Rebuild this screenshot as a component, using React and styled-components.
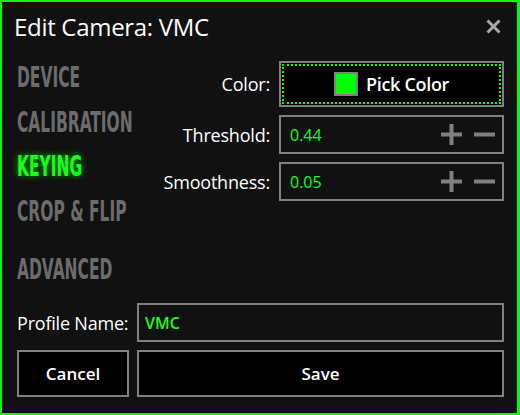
import styled, { createGlobalStyle } from 'styled-components';

const Global = createGlobalStyle`
    html, body {
        margin: 0;
        padding: 0;
        background: #111;
    }
    * {
        box-sizing: border-box;
    }
`;

const Dialog = styled.div`
    width: 520px;
    height: 415px;
    background: #111111;
    border: 2px solid #00ff00;
    border-right-width: 3px;
    display: flex;
    flex-direction: column;
    font-family: "Open Sans", "Noto Sans", sans-serif;
    color: #fff;
`;

const Header = styled.div`
    height: 46px;
    display: flex;
    align-items: center;
    justify-content: space-between;
    padding: 2px 16px 0 12px;
`;

const Title = styled.div`
    font-size: 24px;
    letter-spacing: -0.3px;
`;

const Close = styled.button`
    background: none;
    border: none;
    padding: 0;
    width: 15px;
    height: 15px;
    display: flex;
    cursor: pointer;
`;

const Body = styled.div`
    flex: 1;
    display: flex;
    padding: 13px 13px 0 15px;
`;

const Nav = styled.div`
    width: 140px;
    display: flex;
    flex-direction: column;
    padding-top: 1px;
`;

const NavItem = styled.div`
    height: ${p => p.$tall ? '58px' : '44.5px'};
    font-family: "DejaVu Sans Condensed", "Liberation Sans Narrow", sans-serif;
    font-weight: bold;
    font-size: 20px;
    line-height: 20px;
    text-transform: uppercase;
    white-space: nowrap;
    color: ${p => p.$active ? '#1aff1a' : '#6c6c6c'};
    text-shadow: ${p => p.$active ? '0 0 6px rgba(0, 255, 0, 0.7)' : 'none'};
    cursor: pointer;

    span {
        display: inline-block;
        transform: scale(0.86, 1.45);
        transform-origin: top left;
    }
`;

const Form = styled.div`
    flex: 1;
    display: grid;
    grid-template-columns: 1fr 225px;
    grid-auto-rows: min-content;
    column-gap: 9px;
    row-gap: 8px;
`;

const Label = styled.label`
    font-size: 18px;
    letter-spacing: -0.2px;
    text-align: right;
    align-self: center;
`;

const PickButton = styled.button`
    height: 46px;
    background: #000;
    border: 2px solid #808080;
    outline: 2px dotted #00ff00;
    outline-offset: -5px;
    display: flex;
    align-items: center;
    justify-content: center;
    gap: 8px;
    color: #fff;
    font-family: "Open Sans", sans-serif;
    font-size: 18px;
    font-weight: 600;
    letter-spacing: -0.3px;
    cursor: pointer;
`;

const Swatch = styled.span`
    width: 24px;
    height: 24px;
    border: 2px solid #808080;
    background: ${p => p.$color};
`;

const Stepper = styled.div`
    height: 39px;
    border: 2px solid #808080;
    display: flex;
    align-items: center;
    padding: 0 7px 0 9px;
`;

const Value = styled.div`
    flex: 1;
    color: #1aff1a;
    font-size: 16px;
`;

const StepButton = styled.button`
    background: none;
    border: none;
    padding: 0;
    width: 21px;
    height: 21px;
    margin-left: 12px;
    display: flex;
    cursor: pointer;
`;

const Footer = styled.div`
    display: grid;
    grid-template-columns: 112px 1fr;
    column-gap: 8px;
    row-gap: 8px;
    padding: 0 13px 16px 15px;
`;

const ProfileLabel = styled.label`
    font-size: 18px;
    letter-spacing: -0.2px;
    align-self: center;
`;

const TextInput = styled.input`
    height: 39px;
    background: #111;
    border: 2px solid #808080;
    color: #1aff1a;
    font-family: "Open Sans", sans-serif;
    font-size: 16px;
    font-weight: 600;
    padding: 0 6px;
    outline: none;
`;

const ActionButton = styled.button`
    height: 47px;
    background: #000;
    border: 2px solid #808080;
    color: #fff;
    font-family: "Open Sans", sans-serif;
    font-size: 17px;
    font-weight: 600;
    cursor: pointer;
`;

const Plus = () => (
    <svg width="21" height="21" viewBox="0 0 21 21">
        <path d="M0 10.5H21M10.5 0V21" stroke="#808080" strokeWidth="4" />
    </svg>
);

const Minus = () => (
    <svg width="21" height="21" viewBox="0 0 21 21">
        <path d="M0 10.5H21" stroke="#808080" strokeWidth="4" />
    </svg>
);

const steppers = [
    { label: 'Threshold:', value: '0.44' },
    { label: 'Smoothness:', value: '0.05' },
];

const App = () => {
    return (
        <>
            <Global />
            <Dialog>
                <Header>
                    <Title>Edit Camera: VMC</Title>
                    <Close>
                        <svg width="15" height="15" viewBox="0 0 15 15">
                            <path d="M1.5 1.5L13.5 13.5M13.5 1.5L1.5 13.5" stroke="#a8a8a8" strokeWidth="3" />
                        </svg>
                    </Close>
                </Header>
                <Body>
                    <Nav>
                        <NavItem><span>Device</span></NavItem>
                        <NavItem><span>Calibration</span></NavItem>
                        <NavItem $active><span>Keying</span></NavItem>
                        <NavItem $tall><span>Crop &amp; Flip</span></NavItem>
                        <NavItem><span>Advanced</span></NavItem>
                    </Nav>
                    <Form>
                        <Label>Color:</Label>
                        <PickButton>
                            <Swatch $color="#00ff00" />
                            Pick Color
                        </PickButton>
                        {steppers.map(s => (
                            <>
                                <Label key={s.label}>{s.label}</Label>
                                <Stepper key={s.label + 'box'}>
                                    <Value>{s.value}</Value>
                                    <StepButton><Plus /></StepButton>
                                    <StepButton><Minus /></StepButton>
                                </Stepper>
                            </>
                        ))}
                    </Form>
                </Body>
                <Footer>
                    <ProfileLabel>Profile Name:</ProfileLabel>
                    <TextInput defaultValue="VMC" />
                    <ActionButton>Cancel</ActionButton>
                    <ActionButton>Save</ActionButton>
                </Footer>
            </Dialog>
        </>
    );
};

export default App;
